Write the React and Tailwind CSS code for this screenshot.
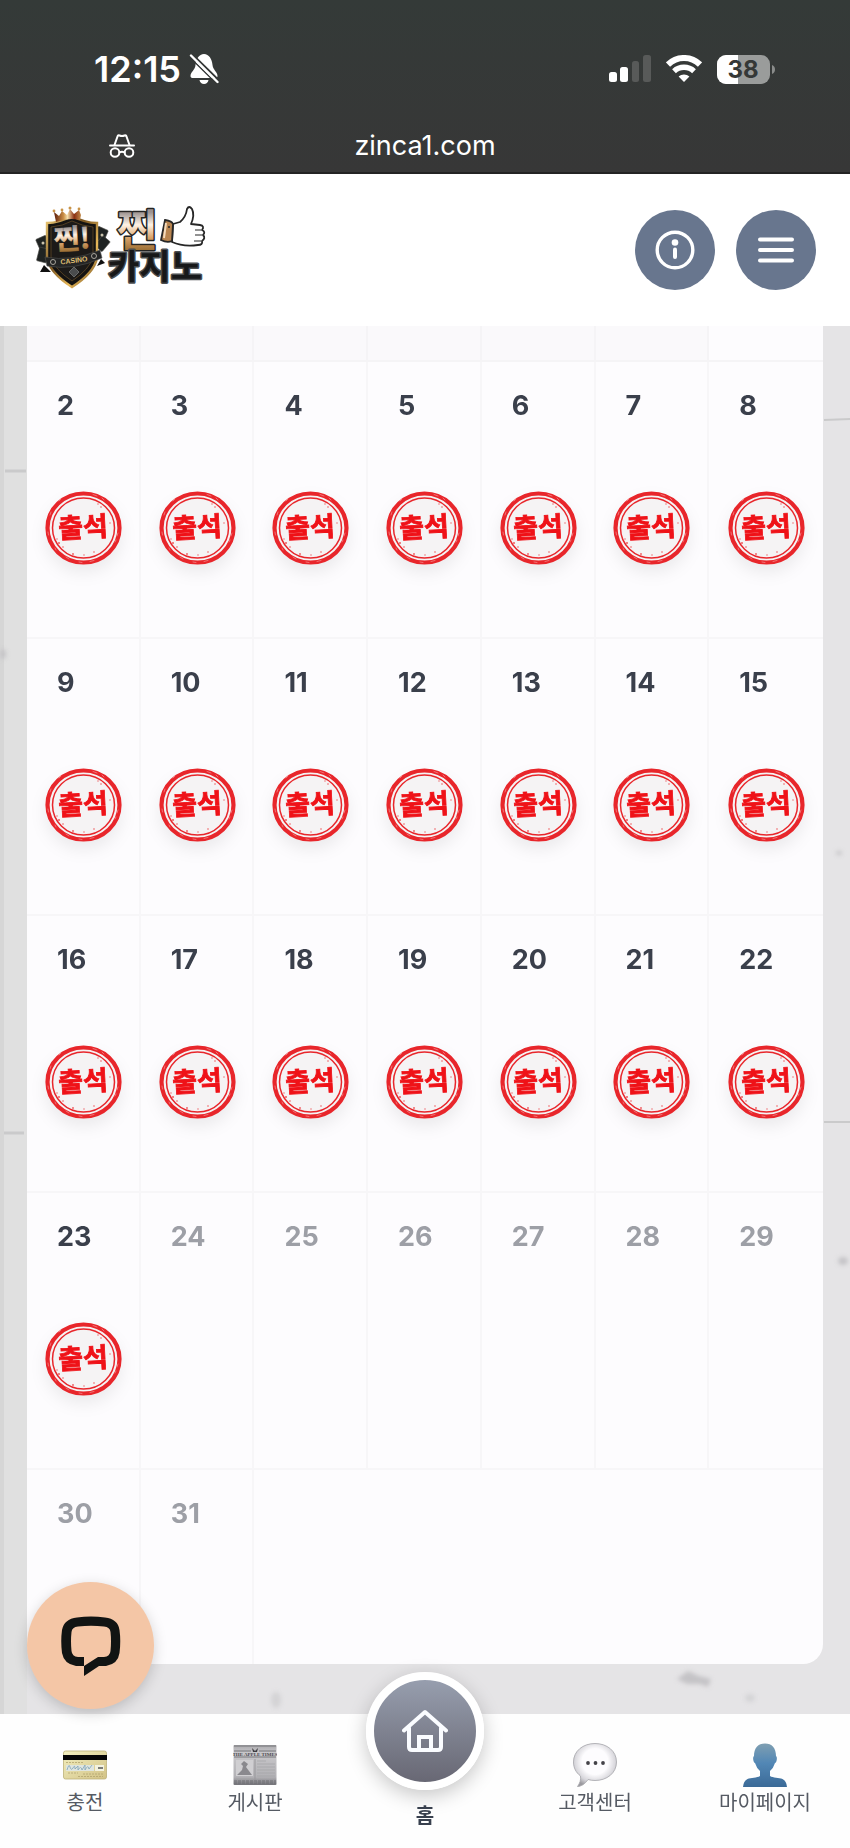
import { useState } from 'react';

const KR = 'font-["Inter","Noto_Sans_CJK_KR",sans-serif]';

const TODAY = 23;
const WEEKS = [
  [2, 3, 4, 5, 6, 7, 8],
  [9, 10, 11, 12, 13, 14, 15],
  [16, 17, 18, 19, 20, 21, 22],
  [23, 24, 25, 26, 27, 28, 29]
];

/* ---------- Status bar icons ---------- */
function BellOff() {
  return (
    <svg width="30" height="32" viewBox="0 0 30 32" aria-hidden="true">
      <path d="M15 1C10 1 7 6 6.500 12C6.200 17 1.500 19 1.500 23C1.500 24.500 2.500 25 4 25H26C27.500 25 28.500 24.500 28.500 23C28.500 19 24 17 23.500 12C23 6 20 1 15 1Z" fill="#fff" />
      <path d="M10.500 27H19.500C19 29.500 17.300 31 15 31S11 29.500 10.500 27Z" fill="#fff" />
      <path d="M3 1L30 27.500" stroke="#353837" strokeWidth="2" />
      <path d="M1 4.500L28 31" stroke="#353837" strokeWidth="1.500" />
      <path d="M2 2.500L28.500 29" stroke="#fff" strokeWidth="2.400" strokeLinecap="round" />
    </svg>
  );
}

function Signal() {
  return (
    <svg width="43" height="28" viewBox="0 0 43 28" aria-hidden="true">
      <rect x="1" y="17" width="8" height="10" rx="2.500" fill="#fff" />
      <rect x="12" y="12" width="8" height="15" rx="2.500" fill="#fff" />
      <rect x="24" y="6" width="7" height="21" rx="2.500" fill="#585a59" />
      <rect x="35" y="0" width="8" height="27" rx="2.500" fill="#585a59" />
    </svg>
  );
}

function Wifi() {
  return (
    <svg width="36" height="28" viewBox="0 0 36 28" fill="none" stroke="#fff" aria-hidden="true">
      <path d="M2 9.500C11 0.800 25 0.800 34 9.500" strokeWidth="6" />
      <path d="M8 16.200C13.600 11 22.400 11 28 16.200" strokeWidth="5.500" />
      <path d="M18 27L12.600 21.600C15.600 18.800 20.400 18.800 23.400 21.600Z" fill="#fff" stroke="none" />
    </svg>
  );
}

function Battery() {
  return (
    <svg width="58" height="29" viewBox="0 0 58 29" aria-hidden="true">
      <defs>
        <clipPath id="batteryBody"><rect width="53" height="29" rx="9" /></clipPath>
      </defs>
      <g clipPath="url(#batteryBody)">
        <rect width="53" height="29" fill="#9a9c9b" />
        <rect width="21" height="29" fill="#fff" />
      </g>
      <path d="M55 10C59 11.500 59 17.500 55 19Z" fill="#8a8c8b" />
      <text x="26" y="23" textAnchor="middle" fontFamily="Inter, sans-serif" fontSize="24" fontWeight="700" fill="#353837">38</text>
    </svg>
  );
}

function Incognito() {
  return (
    <svg width="26" height="24" viewBox="0 0 26 24" fill="none" stroke="#fff" strokeWidth="2" strokeLinecap="round" strokeLinejoin="round" aria-hidden="true">
      <path d="M1 11.500H25" />
      <path d="M5.500 11L8.500 2.500Q9 1 10.500 1.500Q13 2.400 15.500 1.500Q17 1 17.500 2.500L20.500 11" />
      <circle cx="6" cy="18.500" r="4.300" />
      <circle cx="20" cy="18.500" r="4.300" />
      <path d="M10.500 18.500Q13 16.800 15.500 18.500" />
    </svg>
  );
}

/* ---------- Brand ---------- */
function Logo() {
  return (
    <svg className="overflow-visible" width="172" height="84" viewBox="0 0 172 84" fontFamily="'Noto Sans CJK KR', sans-serif" fontWeight="700" role="img" aria-label="찐카지노">
      <defs>
        <linearGradient id="gold" x1="0" y1="0" x2="0" y2="1">
          <stop offset="0.250" stopColor="#9a9190" />
          <stop offset="0.450" stopColor="#fff3e6" />
          <stop offset="0.650" stopColor="#d9a268" />
          <stop offset="0.850" stopColor="#9c6f35" />
        </linearGradient>
        <linearGradient id="rim" x1="0" y1="0" x2="1" y2="1">
          <stop offset="0" stopColor="#f0cd78" />
          <stop offset="0.400" stopColor="#7a5520" />
          <stop offset="0.700" stopColor="#e8b95a" />
          <stop offset="1" stopColor="#5c3d15" />
        </linearGradient>
        <linearGradient id="crown" x1="0" y1="0" x2="1" y2="0">
          <stop offset="0" stopColor="#5d1c0a" />
          <stop offset="0.350" stopColor="#c98d45" />
          <stop offset="0.500" stopColor="#f6dfaa" />
          <stop offset="0.750" stopColor="#8a2f14" />
          <stop offset="1" stopColor="#c28a4a" />
        </linearGradient>
      </defs>

      {/* cards behind the shield */}
      <g fill="#1f2322" stroke="#4a4a45" strokeWidth="0.600">
        <rect x="3" y="31" width="11" height="15" rx="1" transform="rotate(-24 8 38)" />
        <rect x="3" y="42" width="10" height="14" rx="1" transform="rotate(14 8 49)" />
        <rect x="60" y="22" width="11" height="14" rx="1" transform="rotate(24 66 29)" />
        <rect x="62" y="31" width="10" height="13" rx="1" transform="rotate(40 67 38)" />
      </g>
      <circle cx="8" cy="37" r="1.500" fill="#c9c2ac" />
      <circle cx="67" cy="29" r="1.500" fill="#c9c2ac" />

      {/* shield */}
      <path d="M12 17Q24 17 37 10Q50 17 62 17V52Q59 67 37 81Q15 67 12 52Z" fill="#141312" stroke="url(#rim)" strokeWidth="2.400" />
      <path d="M16 21Q28 20 37 15Q47 20 58 21V51Q55 63 37 75Q19 63 16 51Z" fill="#1c1a18" stroke="#6b5028" strokeWidth="0.700" />

      {/* crown */}
      <path d="M21 16L19 6L24 10L27 5L32 9L35 3L39 8L44 4L46 9L45 14Q34 11 21 16Z" fill="url(#crown)" />
      <g fill="#c99448">
        <circle cx="19" cy="5" r="1.400" />
        <circle cx="27" cy="4" r="1.400" />
        <circle cx="35" cy="2" r="1.500" />
        <circle cx="44" cy="3" r="1.400" />
      </g>

      <text x="37" y="43" textAnchor="middle" fontSize="28" fill="url(#gold)" stroke="url(#gold)" strokeWidth="0.600" transform="rotate(-3 36 34)">찐!</text>

      {/* ribbon */}
      <path d="M9 59L5 66L16 66ZM66 53L70 57L62 60Z" fill="#111" />
      <path d="M10 51Q37 56 65 44L67 52Q38 65 12 60Z" fill="#242525" stroke="#505251" strokeWidth="0.600" />
      <g fill="none" stroke="#a8a49b" strokeWidth="1">
        <circle cx="18" cy="56" r="2.500" />
        <circle cx="59" cy="50" r="2.500" />
      </g>
      <text x="39" y="57" textAnchor="middle" fontFamily="'Liberation Sans', sans-serif" fontSize="7" fontWeight="700" fill="#e2c276" transform="rotate(-7 38 55)">CASINO</text>
      <path d="M39 61L44 66L39 71L34 66Z" fill="#4a4c4d" stroke="#8b8d8d" strokeWidth="0.600" />

      {/* wordmark */}
      <g strokeLinejoin="round" paintOrder="stroke">
        <text x="102" y="41" textAnchor="middle" fontSize="44" fill="url(#gold)" stroke="#252423" strokeWidth="3">찐</text>
        <text x="120" y="73" textAnchor="middle" fontSize="34" fill="#171819" stroke="#4b4e50" strokeWidth="3">카지노</text>
      </g>

      {/* thumbs up */}
      <path d="M138 18L145 16Q151 11 152 3Q154 -1 157 3Q160 9 156 18L165 19Q170 20 167 24Q171 26 168 29Q171 32 167 35Q168 39 163 39Q148 41 137 36Z" fill="#fff" stroke="#272727" strokeWidth="1.800" strokeLinejoin="round" />
      <path d="M160 24H166M160 29H167M159 35H166" fill="none" stroke="#272727" strokeWidth="1.200" />
      <path d="M130 14Q137 15 138 18L137 35Q132 37 126 34Z" fill="#b98550" stroke="#272727" strokeWidth="1.800" />
      <path d="M131 17L129 32" stroke="#f6dcbc" strokeWidth="2" />
      <circle cx="134" cy="21" r="1" fill="#272727" />
    </svg>
  );
}

/* ---------- Attendance stamp ---------- */
function Stamp() {
  return (
    <svg className="mx-auto block drop-shadow-[0_8px_8px_rgba(0,0,0,0.07)]" width="78" height="76" viewBox="0 0 78 76" role="img" aria-label="출석">
      <ellipse cx="39.500" cy="38" rx="36" ry="34.500" fill="#f5f3f4" stroke="#e8262b" strokeWidth="4.200" />
      <ellipse cx="39.500" cy="38" rx="31" ry="30" fill="none" stroke="#e8262b" strokeWidth="1.500" />
      <text x="39" y="47" textAnchor="middle" fontFamily="'Noto Sans CJK KR', sans-serif" fontSize="27" fontWeight="700" fill="#ef1218" stroke="#ef1218" strokeWidth="0.800" transform="rotate(-3 39 38)">출석</text>
      {/* worn ink */}
      <g fill="#ef5b5e">
        <circle cx="15" cy="53" r="1" />
        <circle cx="19" cy="57" r="0.800" />
        <circle cx="13" cy="49" r="0.700" />
        <circle cx="29" cy="64" r="0.900" />
        <circle cx="40" cy="65" r="0.700" />
        <circle cx="50" cy="62" r="0.800" />
        <circle cx="54" cy="14" r="0.700" />
        <circle cx="57" cy="17" r="0.800" />
        <circle cx="66" cy="33" r="0.700" />
      </g>
      <g fill="none" stroke="#f38f91" strokeWidth="0.700" strokeLinecap="round">
        <path d="M49 4.500L53 6M58 8L60 10M74 43L73 46M72 50L71 52" />
        <path d="M22 67L25 69M35 72L38 72.500M46 71.500L50 70.500M6 25L7 22M4 42L4.500 45M15 11L17 9M11 58L12 60" />
      </g>
    </svg>
  );
}

/* ---------- Bottom nav icons ---------- */
function CardIcon() {
  return (
    <svg width="44" height="44" viewBox="0 0 44 44" aria-hidden="true">
      <defs>
        <linearGradient id="cardFill" x1="0" y1="0" x2="1" y2="1">
          <stop offset="0" stopColor="#f3efc0" />
          <stop offset="1" stopColor="#d2c285" />
        </linearGradient>
      </defs>
      <rect x="0.500" y="8" width="43" height="28" rx="2" fill="url(#cardFill)" stroke="#bdb17a" strokeWidth="0.800" />
      <rect y="12" width="44" height="5" fill="#050505" />
      <rect x="3" y="22" width="28" height="6" fill="#dfe5df" />
      <rect x="32" y="22" width="9" height="6" fill="#f3f2df" />
      <path d="M4 27Q6 20 7 24T10 25Q12 21 12 26L15 23V27Q18 22 19 27L22 22V27Q25 21 26 26L29 22" fill="none" stroke="#7fa3b8" strokeWidth="0.800" />
      <path d="M35 25H40" stroke="#555" strokeWidth="1.500" />
      <path d="M3 19.500H20M5 30H15M20 31H40M15 33.500H40" stroke="#b2a570" strokeWidth="0.800" strokeDasharray="2 1" />
    </svg>
  );
}

function NewsIcon() {
  return (
    <svg width="44" height="44" viewBox="0 0 44 44" aria-hidden="true">
      <defs>
        <linearGradient id="paper" x1="0" y1="0" x2="0" y2="1">
          <stop offset="0" stopColor="#aaa9ad" />
          <stop offset="0.200" stopColor="#c9c8cb" />
          <stop offset="0.800" stopColor="#b2b1b5" />
          <stop offset="1" stopColor="#737278" />
        </linearGradient>
      </defs>
      <rect x="0.500" y="2" width="43" height="40" rx="1" fill="url(#paper)" />
      <path d="M1 3H43M1 8H18M26 8H43M1 14H43" stroke="#77767b" strokeWidth="1" />
      <path d="M19 5L22 8L25 5L24 9H20Z" fill="#3e3d41" />
      <text x="22" y="13" textAnchor="middle" fontFamily="'Liberation Serif', serif" fontSize="5" fontWeight="700" fill="#4c4b50">THE APPLE TIMES</text>
      <rect x="3" y="17" width="17" height="16" fill="#d0cfd2" />
      <path d="M4 32L9 27L10 23L8 21L11 18L15 21L13 24L19 32Z" fill="#8a898e" />
      <path d="M22 16V40" stroke="#98979b" strokeWidth="1" />
      <path d="M24 18H33M24 21H42M24 24H42M24 27H42M24 30H42M24 33H42M3 36H20" stroke="#a5a4a8" strokeWidth="0.700" />
      <path d="M1 38H43M1 40H43" stroke="#6c6b70" strokeWidth="0.900" strokeDasharray="3 1" />
    </svg>
  );
}

function SpeechIcon() {
  return (
    <svg width="44" height="44" viewBox="0 0 44 44" aria-hidden="true">
      <defs>
        <radialGradient id="speech" cx="0.500" cy="0.420" r="0.600">
          <stop offset="0.500" stopColor="#fdfcfe" />
          <stop offset="0.800" stopColor="#d6d5da" />
          <stop offset="1" stopColor="#9a999e" />
        </radialGradient>
      </defs>
      <path d="M22 0.500C34 0.500 43.500 8 43.500 19C43.500 30 34 37.500 22 37.500C19.500 37.500 17 37.200 15 36.500C12 41 8 43.500 4.500 43.500C7 40 8 37 7.500 33C3 29.500 0.500 25 0.500 19C0.500 8 10 0.500 22 0.500Z" fill="url(#speech)" stroke="#a5a4a9" strokeWidth="0.800" />
      <g fill="#434247">
        <circle cx="15" cy="20" r="1.900" />
        <circle cx="22.500" cy="20" r="1.900" />
        <circle cx="30" cy="20" r="1.900" />
      </g>
    </svg>
  );
}

function PersonIcon() {
  return (
    <svg width="44" height="44" viewBox="0 0 44 44" aria-hidden="true">
      <defs>
        <linearGradient id="person" x1="0" y1="0" x2="0" y2="1">
          <stop offset="0" stopColor="#7f9fb2" />
          <stop offset="0.450" stopColor="#5287b5" />
          <stop offset="1" stopColor="#3b6a97" />
        </linearGradient>
      </defs>
      <path d="M22 0.500C29 0.500 33 5 33 13Q34.500 14 33.500 18Q33 20 32 20Q30.500 25 27 28V33C30 35 36 34.500 39.500 36Q43.500 38 44 44H0Q0.500 38 4.500 36C8 34.500 14 35 17 33V28Q13.500 25 12 20Q11 20 10.500 18Q9.500 14 11 13C11 5 15 0.500 22 0.500Z" fill="url(#person)" />
    </svg>
  );
}

/* Cracks and stains of the wall behind the calendar */
function Wall() {
  return (
    <svg className="absolute inset-0 h-full w-full" viewBox="0 0 850 1388" preserveAspectRatio="none" aria-hidden="true">
      <defs>
        <filter id="soft" x="-50%" y="-50%" width="200%" height="200%"><feGaussianBlur stdDeviation="2" /></filter>
      </defs>
      <rect width="850" height="1388" fill="#e5e4e6" />
      <rect width="27" height="1388" fill="#e0e0e0" />
      <rect width="4" height="1388" fill="#d6d6d6" />
      <g stroke="#cacacb" strokeWidth="3" fill="none">
        <path d="M5 145H26M4 807H24" />
        <path d="M824 94L850 93M824 796H850" strokeWidth="2" />
      </g>
      <g fill="#c4c3c6" filter="url(#soft)">
        <ellipse cx="843" cy="935" rx="5" ry="4" />
        <ellipse cx="839" cy="527" rx="3" ry="2" />
        <ellipse cx="3" cy="328" rx="3" ry="5" />
        <path d="M677 1353L688 1345L699 1350L711 1353L708 1361L700 1358L687 1358Z" />
        <ellipse cx="750" cy="1372" rx="5" ry="4" opacity="0.500" />
        <ellipse cx="276" cy="1374" rx="5" ry="8" opacity="0.500" />
      </g>
    </svg>
  );
}

function Day({ day }) {
  const attended = day <= TODAY;
  return (
    <td className="h-[277px] border-r-2 border-b-2 border-[#f7f6f8] p-0 align-top last:border-r-0">
      <div className={`mt-7 mb-[68px] pl-[30px] text-[27px] leading-8 font-bold ${attended ? 'text-[#3a3f4b]' : 'text-[#9d9fa6]'}`}>
        {day}
      </div>
      {attended && <Stamp />}
    </td>
  );
}

const NAV_LEFT = [
  { label: '충전', Icon: CardIcon },
  { label: '게시판', Icon: NewsIcon }
];
const NAV_RIGHT = [
  { label: '고객센터', Icon: SpeechIcon },
  { label: '마이페이지', Icon: PersonIcon }
];

function NavItem({ label, Icon }) {
  return (
    <a href="#" className="flex flex-col items-center gap-1 pt-[29px]">
      <Icon />
      <span className="text-xl leading-6 text-[#555a63]">{label}</span>
    </a>
  );
}

export default function App() {
  const [menuOpen, setMenuOpen] = useState(false);

  return (
    <div className={`flex min-h-screen flex-col bg-[#e5e4e6] ${KR}`}>
      {/* STATUS BAR + URL */}
      <div className="border-b-2 border-[#232323] bg-linear-to-b from-[#343a38] to-[#373737] text-white">
        <div className="flex h-[120px] items-center justify-between pt-[18px] pr-[75px] pl-[94px]">
          <div className="flex items-center gap-2">
            <span className="text-4xl leading-10 font-semibold">12:15</span>
            <BellOff />
          </div>
          <div className="flex items-center gap-[15px]">
            <Signal />
            <Wifi />
            <Battery />
          </div>
        </div>
        <div className="grid h-[52px] grid-cols-[1fr_auto_1fr] items-center">
          <span className="pl-[109px]"><Incognito /></span>
          <span className="text-[27px] leading-8">zinca1.com</span>
        </div>
      </div>

      {/* HEADER */}
      <header className="z-20 flex h-[152px] items-center justify-between bg-white pr-[34px] pb-px pl-[35px]">
        <a href="#" className="pb-1"><Logo /></a>
        <div className="flex gap-[21px]">
          <button type="button" aria-label="정보" className="flex size-20 items-center justify-center rounded-full bg-[#68768e]">
            <svg width="40" height="40" viewBox="0 0 40 40" fill="none" stroke="#fff" strokeLinecap="round">
              <circle cx="20" cy="20" r="17.800" strokeWidth="3.400" />
              <circle cx="20" cy="12.500" r="3.300" fill="#fff" stroke="none" />
              <path d="M20 19.500V27" strokeWidth="4" />
            </svg>
          </button>
          <button
            type="button"
            aria-label="메뉴"
            aria-expanded={menuOpen}
            onClick={() => setMenuOpen(!menuOpen)}
            className="flex size-20 items-center justify-center rounded-full bg-[#68768e]"
          >
            <svg width="36" height="26" viewBox="0 0 36 26" stroke="#fff" strokeWidth="4" strokeLinecap="round">
              <path d="M2 2.500H34M2 13H34M2 23.500H34" />
            </svg>
          </button>
        </div>
      </header>

      {/* CALENDAR */}
      <main className="relative flex-1 px-[27px] pb-[50px]">
        <Wall />
        <div className="relative overflow-hidden rounded-b-[20px] bg-[#fdfcfe]">
          <table className="w-full table-fixed border-separate border-spacing-0">
            <tbody>
              <tr>
                {WEEKS[0].map(d => (
                  <td key={d} className="h-9 border-r-2 border-b-2 border-[#f5f4f6] bg-[#faf9fb] p-0 last:border-r-0 last:bg-[#fdfcfe]" />
                ))}
              </tr>
              {WEEKS.map(week => (
                <tr key={week[0]}>
                  {week.map(d => <Day key={d} day={d} />)}
                </tr>
              ))}
              <tr>
                {[30, 31].map(d => (
                  <td key={d} className="h-[194px] border-r-2 border-[#f7f6f8] p-0 align-top">
                    <div className="mt-7 pl-[30px] text-[27px] leading-8 font-bold text-[#9d9fa6]">{d}</div>
                  </td>
                ))}
                <td colSpan={5} />
              </tr>
            </tbody>
          </table>
        </div>
      </main>

      {/* CHAT BUBBLE */}
      <button
        type="button"
        aria-label="채팅"
        className="fixed bottom-[139px] left-[27px] z-30 flex size-[127px] items-center justify-center rounded-full bg-[#f4c6a6] shadow-[0_4px_14px_rgba(0,0,0,0.18)]"
      >
        <svg width="60" height="60" viewBox="0 0 60 60">
          <path
            fillRule="evenodd"
            d="M16 1.500Q30 -0.500 44 1.500Q57 3 58.500 14Q60 25 58.500 37Q57 48 45 50H38L23 60V50H15Q3 48 1 37Q-0.500 25 1 14Q3 3 16 1.500ZM17 10.500Q11 11 10.500 16Q9.500 25 10.500 35Q11 40.500 17 41H23V50L37 41H43Q49 40.500 49.500 35Q50.500 25 49.500 16Q49 11 43 10.500Q30 9 17 10.500Z"
            fill="#111413"
          />
        </svg>
      </button>

      {/* BOTTOM NAV */}
      <nav className="sticky bottom-0 z-20 grid h-[134px] grid-cols-5 bg-[#fefefe]">
        {NAV_LEFT.map(item => <NavItem key={item.label} {...item} />)}
        <a href="#" className="-mt-[42px] flex flex-col items-center gap-[14px]">
          <span className="flex size-[118px] shrink-0 items-center justify-center rounded-full border-8 border-white bg-linear-to-b from-[#979eae] to-[#686874] shadow-[0_6px_20px_rgba(0,0,0,0.22)]">
            <svg width="46" height="44" viewBox="0 0 46 44" fill="none" stroke="#fafcff" strokeWidth="4" strokeLinecap="round" strokeLinejoin="round">
              <path d="M2 21.500L23 3L44 21.500" />
              <path d="M7 19V38Q7 41 10 41H36Q39 41 39 38V19" />
              <path d="M17 41V28H29V41" strokeLinejoin="miter" />
            </svg>
          </span>
          <span className="text-xl leading-6 font-bold text-[#38404e]">홈</span>
        </a>
        {NAV_RIGHT.map(item => <NavItem key={item.label} {...item} />)}
      </nav>
    </div>
  );
}
